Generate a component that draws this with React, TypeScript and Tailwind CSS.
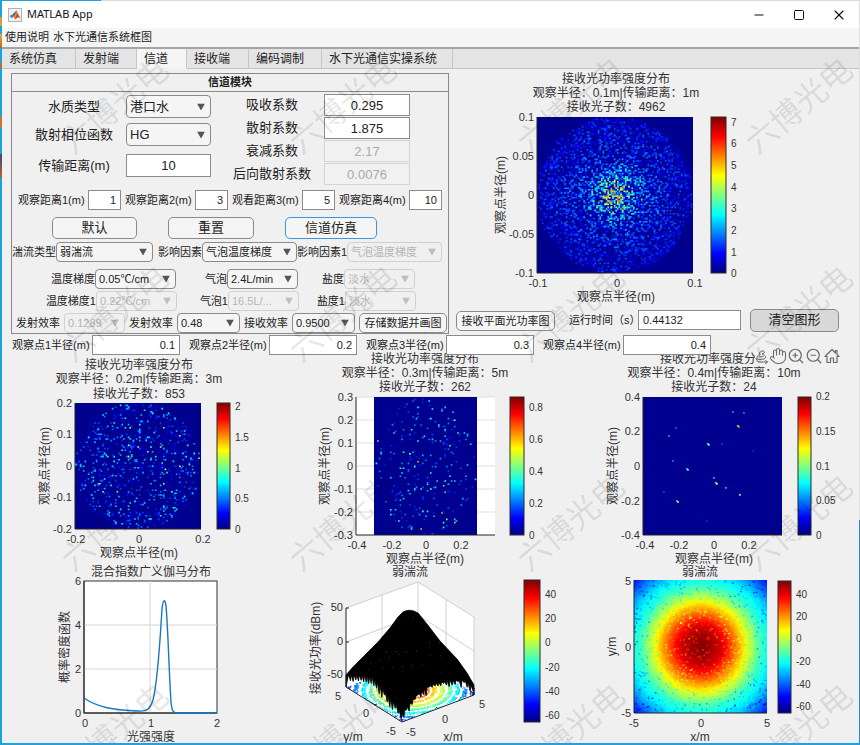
/**
 * 水下光通信仿真界面：信道页。
 *
 * 上半部分为信道参数面板与主强度图，下半部分为各观察点的结果图。
 */
import { type ReactNode } from 'react';
import { Hand, Minus, Square, X, ZoomIn, ZoomOut } from 'lucide-react';

type Tick = [label: string, pos: number];

interface Box {
  x: number;
  y: number;
  w: number;
  h: number;
}

/** 固定种子的随机数，保证每次绘制一致。 */
function createRandom(seed: number) {
  let s = seed;
  return () => {
    s = (s * 1664525 + 1013904223) % 4294967296;
    return s / 4294967296;
  };
}

const clamp = (v: number) => Math.min(1, Math.max(0, v));

/** MATLAB jet 色表，t 取 0~1。 */
function jet(t: number) {
  const c = (o: number) => Math.round(255 * clamp(1.5 - Math.abs(4 * t - o)));
  return `rgb(${c(3)},${c(2)},${c(1)})`;
}

type Speck = { x: number; y: number; t: number };

/** 按颜色分组绘制散点，每种颜色只生成一个 path。 */
function Specks({ items, size }: { items: Speck[]; size: number }) {
  const bins = new Map<number, string>();
  items.forEach(({ x, y, t }) => {
    const k = Math.round(clamp(t) * 32);
    const d = `M${x.toFixed(1)} ${y.toFixed(1)}h${size}v${size}h-${size}z`;
    bins.set(k, (bins.get(k) ?? '') + d);
  });
  return (
    <>
      {[...bins.entries()]
        .sort((a, b) => a[0] - b[0])
        .map(([k, d]) => (
          <path key={k} d={d} fill={jet(k / 32)} />
        ))}
    </>
  );
}

interface Spread {
  count: number;
  seed: number;
  /** 半径分布指数，0.5 为均匀，越大越向中心集中 */
  focus: number;
  cell: number;
  level: (r: number, n: number) => number;
}

/** 圆形接收面内的光子分布。 */
function photons(box: Box, { count, seed, focus, cell, level }: Spread): Speck[] {
  const rnd = createRandom(seed);
  const cx = box.x + box.w / 2;
  const cy = box.y + box.h / 2;
  return Array.from({ length: count }, () => {
    const r = Math.pow(rnd(), focus);
    const a = rnd() * Math.PI * 2;
    const x = cx + (r * Math.cos(a) * box.w) / 2;
    const y = cy + (r * Math.sin(a) * box.h) / 2;
    return {
      x: Math.min(box.x + box.w - cell, box.x + Math.floor((x - box.x) / cell) * cell),
      y: Math.min(box.y + box.h - cell, box.y + Math.floor((y - box.y) / cell) * cell),
      t: level(r, rnd()),
    };
  });
}

const MAIN: Box = { x: 537, y: 117, w: 156, h: 156 };
const SECOND: Box = { x: 75, y: 403, w: 126, h: 126 };
const THIRD: Box = { x: 374, y: 397, w: 103, h: 138 };
const FOURTH: Box = { x: 643, y: 397, w: 139, h: 138 };
const FIELD: Box = { x: 634, y: 580, w: 133, h: 133 };

const MAIN_SPECKS = photons(MAIN, {
  count: 6200,
  seed: 7,
  focus: 0.6,
  cell: 1.6,
  level: (r, n) =>
    0.02 + Math.pow(n, 1.7) * (0.38 - 0.2 * r) + Math.exp(-r * r * 16) * (0.1 + Math.pow(n, 3) * 0.34),
});
const SECOND_SPECKS = photons(SECOND, {
  count: 853,
  seed: 21,
  focus: 0.54,
  cell: 1.6,
  level: (_, n) => 0.11 + Math.pow(n, 2) * 0.3 + (n > 0.985 ? 0.2 : 0),
});
const THIRD_SPECKS = photons(THIRD, {
  count: 262,
  seed: 33,
  focus: 0.52,
  cell: 1.6,
  level: (_, n) => 0.14 + Math.pow(n, 2) * 0.34 + (n > 0.97 ? 0.22 : 0),
});
const FOURTH_SPECKS: Speck[] = [
  [732, 411, 0.28], [743, 412, 0.24], [737, 425, 0.4], [738, 426, 0.75], [675, 427, 0.22],
  [668, 435, 0.28], [707, 443, 0.38], [708, 444, 0.48], [721, 443, 0.18], [731, 441, 0.1],
  [752, 450, 0.16], [672, 460, 0.26], [686, 468, 0.3], [687, 469, 0.5], [713, 477, 0.32],
  [715, 482, 0.4], [716, 483, 0.65], [725, 487, 0.3], [739, 494, 0.44], [663, 491, 0.18],
  [667, 495, 0.14], [676, 500, 0.3], [677, 501, 0.6], [706, 520, 0.17], [702, 515, 0.09],
].map(([x, y, t]) => ({ x, y, t }));

/** 弱湍流场强度随像素半径变化的采样点，步长 10。 */
const FIELD_LEVELS = [1, 0.975, 0.92, 0.81, 0.69, 0.56, 0.44, 0.37, 0.28, 0.17, 0.1, 0.08];

function fieldLevel(r: number) {
  const i = Math.min(FIELD_LEVELS.length - 2, Math.floor(r / 10));
  const f = Math.min(1, r / 10 - i);
  return FIELD_LEVELS[i] * (1 - f) + FIELD_LEVELS[i + 1] * f;
}

const FIELD_SPECKS: Speck[] = (() => {
  const rnd = createRandom(91);
  return Array.from({ length: 2800 }, () => {
    const x = FIELD.x + rnd() * (FIELD.w - 2);
    const y = FIELD.y + rnd() * (FIELD.h - 2);
    const r = Math.hypot(x - 700.5, y - 646.5);
    const drop = rnd() < 0.22 ? 0.06 + rnd() * 0.14 : (rnd() - 0.4) * 0.07;
    return { x, y, t: Math.max(0.06, fieldLevel(r) - drop) };
  });
})();

/** 三维图底面上的等高散点。 */
const FLOOR_SPECKS: Speck[] = (() => {
  const rnd = createRandom(5);
  const out: Speck[] = [];
  for (let i = 0; i < 5200; i++) {
    const u = rnd() * 2 - 1;
    const v = rnd() * 2 - 1;
    const r = Math.hypot(u, v);
    if (Math.sin(r * 38) < -0.25) continue;
    out.push({ x: 410 + u * 36 - v * 28, y: 690 - u * 14 - v * 17, t: 1 - r * 0.62 });
  }
  return out;
})();

/** 曲面轮廓，下缘为锯齿。 */
const SURFACE = (() => {
  const rnd = createRandom(14);
  const edge: [number, number][] = [
    [474, 688], [465, 680], [450, 680], [436, 683], [427, 687], [419, 693], [410, 703],
    [402, 714], [396, 704], [388, 696], [380, 685], [372, 677], [362, 675], [346, 675],
  ];
  let d = 'M346 675L353 667L362 658L378 642L390 628L398 617L403 612Q410 608 418 613L427 624L440 641L457 659L467 673L474 685V695';
  for (let i = 0; i < edge.length - 1; i++) {
    const [x0, y0] = edge[i];
    const [x1, y1] = edge[i + 1];
    const n = Math.max(2, Math.round(Math.abs(x1 - x0) / 2.8));
    for (let k = 0; k < n; k++) {
      const x = x0 + ((x1 - x0) * k) / n;
      const y = y0 + ((y1 - y0) * k) / n;
      d += `L${x.toFixed(1)} ${y.toFixed(1)}L${(x - 0.8).toFixed(1)} ${(y + 1 + rnd() * 9).toFixed(1)}`;
    }
  }
  return `${d}L346 687Z`;
})();

interface LabelProps {
  x: number;
  y: number;
  anchor?: 'start' | 'middle' | 'end';
  className?: string;
  turned?: boolean;
  children: ReactNode;
}

function Label({ x, y, anchor = 'middle', className = 'text-[11px]', turned, children }: LabelProps) {
  return (
    <text
      x={x}
      y={y}
      textAnchor={anchor}
      dominantBaseline="central"
      className={`${className} fill-[#333]`}
      transform={turned ? `rotate(-90 ${x} ${y})` : undefined}
    >
      {children}
    </text>
  );
}

function Colorbar({ id, box, ticks }: { id: string; box: Box; ticks: Tick[] }) {
  return (
    <g>
      <defs>
        <linearGradient id={id} x1="0" y1="1" x2="0" y2="0">
          {Array.from({ length: 17 }, (_, i) => (
            <stop key={i} offset={i / 16} stopColor={jet(i / 16)} />
          ))}
        </linearGradient>
      </defs>
      <rect x={box.x} y={box.y} width={box.w} height={box.h} fill={`url(#${id})`} stroke="#2a2a2a" />
      {ticks.map(([label, y]) => (
        <Label key={label} x={box.x + box.w + 5} y={y} anchor="start" className="text-[10px]">
          {label}
        </Label>
      ))}
    </g>
  );
}

interface AxesProps {
  box: Box;
  titles: Tick[];
  titleX: number;
  xTicks: Tick[];
  yTicks: Tick[];
  xLabel: string;
  yLabel: string;
  yLabelX: number;
  children: ReactNode;
}

/** 通用二维坐标区：标题、刻度、轴名。 */
function Axes({ box, titles, titleX, xTicks, yTicks, xLabel, yLabel, yLabelX, children }: AxesProps) {
  const bottom = box.y + box.h;
  return (
    <g>
      {titles.map(([t, y]) => (
        <Label key={t} x={titleX} y={y} className="text-[12px]">
          {t}
        </Label>
      ))}
      {children}
      <path d={`M${box.x} ${box.y}V${bottom}H${box.x + box.w}`} fill="none" stroke="#222" />
      {yTicks.map(([t, y]) => (
        <Label key={t} x={box.x - 3} y={y} anchor="end">
          {t}
        </Label>
      ))}
      {xTicks.map(([t, x]) => (
        <Label key={t} x={x} y={bottom + 10}>
          {t}
        </Label>
      ))}
      <Label x={titleX} y={bottom + 24} className="text-[12px]">
        {xLabel}
      </Label>
      <Label x={yLabelX} y={box.y + box.h / 2} className="text-[12px]" turned>
        {yLabel}
      </Label>
    </g>
  );
}

const RADIUS = '观察点半径(m)';

function MainChart() {
  return (
    <svg viewBox="449 69 408 236" preserveAspectRatio="xMinYMin" className="h-[236px] w-full overflow-visible" role="img" aria-label="接收光功率强度分布 1m">
      <Axes
        box={MAIN}
        titleX={616}
        titles={[['接收光功率强度分布', 79], ['观察半径：0.1m|传输距离：1m', 93], ['接收光子数：4962', 107]]}
        yTicks={[['0.1', 117], ['0.05', 156], ['0', 195], ['-0.05', 234], ['-0.1', 273]]}
        xTicks={[['-0.1', 538], ['0', 617], ['0.1', 695]]}
        xLabel={RADIUS}
        yLabel={RADIUS}
        yLabelX={501}
      >
        <rect x={MAIN.x} y={MAIN.y} width={MAIN.w} height={MAIN.h} fill="#00008f" />
        <Specks items={MAIN_SPECKS} size={1.6} />
      </Axes>
      <Colorbar
        id="bar-main"
        box={{ x: 711, y: 117, w: 15, h: 156 }}
        ticks={[['7', 122], ['6', 143], ['5', 165], ['4', 187], ['3', 208], ['2', 230], ['1', 252], ['0', 273]]}
      />
    </svg>
  );
}

function SecondChart() {
  return (
    <svg viewBox="2 345 285 220" className="h-[220px] w-[285px] overflow-visible" role="img" aria-label="接收光功率强度分布 3m">
      <Axes
        box={SECOND}
        titleX={139}
        titles={[['接收光功率强度分布', 365], ['观察半径：0.2m|传输距离：3m', 379], ['接收光子数：853', 394]]}
        yTicks={[['0.2', 403], ['0.1', 434], ['0', 466], ['-0.1', 497], ['-0.2', 529]]}
        xTicks={[['-0.2', 76], ['0', 139], ['0.2', 203]]}
        xLabel={RADIUS}
        yLabel={RADIUS}
        yLabelX={45}
      >
        <rect x={SECOND.x} y={SECOND.y} width={SECOND.w} height={SECOND.h} fill="#00008f" />
        <Specks items={SECOND_SPECKS} size={1.6} />
      </Axes>
      <Colorbar
        id="bar-second"
        box={{ x: 217, y: 403, w: 13, h: 126 }}
        ticks={[['2', 406], ['1.5', 437], ['1', 468], ['0.5', 498], ['0', 529]]}
      />
    </svg>
  );
}

function ThirdChart() {
  return (
    <svg viewBox="288 345 285 220" className="h-[220px] w-[285px] overflow-visible" role="img" aria-label="接收光功率强度分布 5m">
      <Axes
        box={{ x: 356, y: 397, w: 139, h: 138 }}
        titleX={425}
        titles={[['接收光功率强度分布', 359], ['观察半径：0.3m|传输距离：5m', 373], ['接收光子数：262', 387]]}
        yTicks={[['0.3', 397], ['0.2', 420], ['0.1', 443], ['0', 466], ['-0.1', 489], ['-0.2', 512], ['-0.3', 535]]}
        xTicks={[['-0.4', 357], ['-0.2', 392], ['0', 426], ['0.2', 461]]}
        xLabel={RADIUS}
        yLabel={RADIUS}
        yLabelX={325}
      >
        <rect x={356} y={397} width={139} height={138} fill="#fff" />
        <path d="M356 397H495M356 420H495M356 443H495M356 466H495M356 489H495M356 512H495" stroke="#dfdfdf" />
        <rect x={THIRD.x} y={THIRD.y} width={THIRD.w} height={THIRD.h} fill="#00008f" />
        <Specks items={THIRD_SPECKS} size={1.6} />
      </Axes>
      <Colorbar
        id="bar-third"
        box={{ x: 510, y: 397, w: 14, h: 138 }}
        ticks={[['0.8', 407], ['0.6', 439], ['0.4', 471], ['0.2', 503], ['0', 535]]}
      />
    </svg>
  );
}

function FourthChart() {
  return (
    <svg viewBox="574 345 285 220" className="h-[220px] w-[285px] overflow-visible" role="img" aria-label="接收光功率强度分布 10m">
      <Axes
        box={FOURTH}
        titleX={714}
        titles={[['接收光功率强度分布', 359], ['观察半径：0.4m|传输距离：10m', 373], ['接收光子数：24', 387]]}
        yTicks={[['0.4', 397], ['0.2', 431], ['0', 466], ['-0.2', 501], ['-0.4', 535]]}
        xTicks={[['-0.4', 645], ['-0.2', 679], ['0', 714], ['0.2', 749]]}
        xLabel={RADIUS}
        yLabel={RADIUS}
        yLabelX={613}
      >
        <rect x={FOURTH.x} y={FOURTH.y} width={FOURTH.w} height={FOURTH.h} fill="#00008f" />
        <Specks items={FOURTH_SPECKS} size={1.8} />
      </Axes>
      <Colorbar
        id="bar-fourth"
        box={{ x: 798, y: 397, w: 13, h: 138 }}
        ticks={[['0.2', 396], ['0.15', 431], ['0.1', 466], ['0.05', 500], ['0', 535]]}
      />
    </svg>
  );
}

function GammaChart() {
  return (
    <svg viewBox="2 565 285 178" className="h-[178px] w-[285px] overflow-visible" role="img" aria-label="混合指数广义伽马分布">
      <Axes
        box={{ x: 84, y: 581, w: 133, h: 132 }}
        titleX={151}
        titles={[['混合指数广义伽马分布', 572]]}
        yTicks={[['6', 581], ['4', 625], ['2', 669], ['0', 713]]}
        xTicks={[['0', 85], ['1', 151], ['2', 217]]}
        xLabel="光强强度"
        yLabel="概率密度函数"
        yLabelX={65}
      >
        <rect x={84} y={581} width={133} height={132} fill="#fff" stroke="#333" />
        <path d="M84 625H217M84 669H217M150 581V713" stroke="#d5d5d5" />
      </Axes>
      <path
        d="M84 698C97 707 112 710 138 711C147 712 150 709 153 700C158 680 160 640 162 609C163 599 165 598 166 606C168 628 169 672 171 702C172 711 173 713 177 713H217"
        fill="none"
        stroke="#1878be"
        strokeWidth={1.4}
      />
    </svg>
  );
}

function SurfaceChart() {
  return (
    <svg viewBox="288 565 285 178" className="h-[178px] w-[285px] overflow-visible" role="img" aria-label="弱湍流三维图">
      <Label x={410} y={572} className="text-[12px]">弱湍流</Label>
      <path d="M346 608L418 582L474 617V695L402 722L346 687Z" fill="#fff" />
      <path d="M346 608L418 582L474 617V695M418 582V640M382 595V660M446 599V670M346 642L418 615L474 651" fill="none" stroke="#d0d0d0" />
      <Specks items={FLOOR_SPECKS} size={1.1} />
      <path d={SURFACE} fill="#000" stroke="#000" strokeWidth={0.8} />
      <g strokeWidth={1} strokeDasharray="1 9" opacity={0.6}>
        <path d="M403 616l20 1" stroke="#8c1c10" />
        <path d="M386 652l33 -1m10 -8l12 0" stroke="#6f7a20" />
        <path d="M370 664l30 -10m30 1l12 1m-60 12l50 -4" stroke="#1c7a6c" />
        <path d="M358 670l12 0m70 2l20 3" stroke="#1c4a8c" />
      </g>
      <path d="M346 608V687L402 722L474 695" fill="none" stroke="#222" />
      <path d="M346 608h3M346 642h3M346 674h3M374 705l3 -1M438 709l-2 -2" stroke="#222" />
      <Label x={343} y={607} anchor="end">50</Label>
      <Label x={343} y={641} anchor="end">0</Label>
      <Label x={343} y={674} anchor="end">-50</Label>
      <Label x={338} y={696}>5</Label>
      <Label x={366} y={713}>0</Label>
      <Label x={391} y={731}>-5</Label>
      <Label x={411} y={732}>-5</Label>
      <Label x={445} y={719}>0</Label>
      <Label x={482} y={704}>5</Label>
      <Label x={353} y={737} className="text-[12px]">y/m</Label>
      <Label x={453} y={737} className="text-[12px]">x/m</Label>
      <Label x={316} y={648} className="text-[12px]" turned>接收光功率(dBm)</Label>
      <Colorbar
        id="bar-surface"
        box={{ x: 524, y: 580, w: 16, h: 142 }}
        ticks={[['40', 594], ['20', 618], ['0', 642], ['-20', 667], ['-40', 691], ['-60', 715]]}
      />
    </svg>
  );
}

function FieldChart() {
  return (
    <svg viewBox="574 565 285 178" className="h-[178px] w-[285px] overflow-visible" role="img" aria-label="弱湍流平面图">
      <defs>
        <radialGradient id="field" gradientUnits="userSpaceOnUse" cx="700.5" cy="646.5" r="96">
          {Array.from({ length: 25 }, (_, i) => (
            <stop key={i} offset={i / 24} stopColor={jet(fieldLevel(i * 4))} />
          ))}
        </radialGradient>
      </defs>
      <Axes
        box={FIELD}
        titleX={700}
        titles={[['弱湍流', 572]]}
        yTicks={[['5', 581], ['0', 647], ['-5', 713]]}
        xTicks={[['-5', 634], ['0', 701], ['5', 767]]}
        xLabel="x/m"
        yLabel="y/m"
        yLabelX={612}
      >
        <rect x={FIELD.x} y={FIELD.y} width={FIELD.w} height={FIELD.h} fill="url(#field)" />
        <Specks items={FIELD_SPECKS} size={1.6} />
      </Axes>
      <Colorbar
        id="bar-field"
        box={{ x: 778, y: 581, w: 13, h: 132 }}
        ticks={[['40', 594], ['20', 616], ['0', 638], ['-20', 661], ['-40', 684], ['-60', 706]]}
      />
    </svg>
  );
}

interface FieldProps {
  id: string;
  label: string;
  value: string;
  labelClass: string;
  className: string;
  disabled?: boolean;
}

function NumberField({ id, label, value, labelClass, className, disabled }: FieldProps) {
  return (
    <>
      <label htmlFor={id} className={`shrink-0 whitespace-nowrap ${labelClass}`}>
        {label}
      </label>
      <input
        id={id}
        defaultValue={value}
        disabled={disabled}
        className={`min-w-0 shrink-0 border border-[#8c8c8c] bg-white text-[#222] outline-none disabled:border-[#d4d4d4] disabled:bg-[#f1f1f1] disabled:text-[#aaa] ${className}`}
      />
    </>
  );
}

function SelectField({ id, label, value, labelClass, className, disabled }: FieldProps) {
  return (
    <>
      <label htmlFor={id} className={`shrink-0 whitespace-nowrap ${labelClass}`}>
        {label}
      </label>
      <span className={`relative shrink-0 ${className}`}>
        <select
          id={id}
          defaultValue={value}
          disabled={disabled}
          className="block h-full w-full appearance-none rounded-[4px] border border-[#8a8a8a] bg-[#f5f5f5] pl-[3px] text-[#222] opacity-100 outline-none disabled:border-[#d0d0d0] disabled:bg-[#f0f0f0] disabled:text-[#b4b4b4]"
        >
          <option>{value}</option>
        </select>
        <svg
          viewBox="0 0 8 7"
          className={`pointer-events-none absolute top-1/2 right-[6px] h-[7px] w-[8px] -translate-y-1/2 ${disabled ? 'fill-[#bdbdbd]' : 'fill-[#555]'}`}
        >
          <path d="M0 0H8L4 7Z" />
        </svg>
      </span>
    </>
  );
}

function PushButton({ className, children }: { className: string; children: ReactNode }) {
  return (
    <button
      type="button"
      className={`flex shrink-0 items-center justify-center whitespace-nowrap rounded-[5px] border text-[#222] ${className}`}
    >
      {children}
    </button>
  );
}

function ChannelPanel() {
  const left = 'w-[100px] text-center text-[13px]';
  const tall = 'h-[23px] w-[85px] text-[13px]';
  return (
    <section className="mt-1 ml-[9px] w-[438px] shrink-0 border border-[#8a8a8a] text-[11px]">
      <h2 className="flex h-[18px] items-center justify-center border-b border-[#8a8a8a] text-[11px] font-bold">信道模块</h2>

      <div className="flex">
        <div className="ml-3 flex flex-col pt-[3px]">
          <div className="flex items-center gap-[2px]">
            <SelectField id="water" label="水质类型" value="港口水" labelClass={left} className={tall} />
          </div>
          <div className="mt-[5px] flex items-center gap-[2px]">
            <SelectField id="phase" label="散射相位函数" value="HG" labelClass={left} className={tall} />
          </div>
          <div className="mt-2 flex items-center gap-[2px]">
            <NumberField id="range" label="传输距离(m)" value="10" labelClass={left} className={`${tall} text-center`} />
          </div>
        </div>
        <div className="ml-[11px] flex flex-col gap-px pt-[2px]">
          {[
            ['吸收系数', '0.295', false],
            ['散射系数', '1.875', false],
            ['衰减系数', '2.17', true],
            ['后向散射系数', '0.0076', true],
          ].map(([label, value, off]) => (
            <div key={label as string} className="flex items-center gap-[2px]">
              <NumberField
                id={`coef-${label}`}
                label={label as string}
                value={value as string}
                disabled={off as boolean}
                labelClass={left}
                className="h-[22px] w-[86px] text-center text-[13px]"
              />
            </div>
          ))}
        </div>
      </div>

      <div className="mt-[5px] ml-[6px] flex items-center gap-1">
        {[
          ['观察距离1(m)', '1'],
          ['观察距离2(m)', '3'],
          ['观看距离3(m)', '5'],
          ['观察距离4(m)', '10'],
        ].map(([label, value]) => (
          <NumberField
            key={label}
            id={label}
            label={label}
            value={value}
            labelClass="w-[66px]"
            className="h-5 w-[33px] pr-1 text-right text-[11px]"
          />
        ))}
      </div>

      <div className="mt-[7px] ml-10 flex gap-[31px] text-[13px]">
        <PushButton className="h-[22px] w-[85px] border-[#8a8a8a] bg-[#f5f5f5]">默认</PushButton>
        <PushButton className="h-[22px] w-[86px] border-[#8a8a8a] bg-[#f5f5f5]">重置</PushButton>
        <PushButton className="h-[22px] w-[92px] border-[#3f94dc] bg-[#f5f5f5]">信道仿真</PushButton>
      </div>

      <div className="mt-[3px] flex items-center">
        <SelectField id="turb" label="湍流类型" value="弱湍流" labelClass="w-[44px]" className="h-5 w-[97px]" />
        <SelectField id="factor" label="影响因素" value="气泡温度梯度" labelClass="w-[49px] text-right" className="h-5 w-[95px]" />
        <SelectField id="factor1" label="影响因素1" value="气泡温度梯度" labelClass="w-[50px]" className="h-5 w-[95px]" disabled />
      </div>

      <div className="mt-[7px] flex items-center">
        <SelectField id="temp" label="温度梯度" value="0.05℃/cm" labelClass="w-[83px] text-right" className="h-5 w-[81px]" />
        <SelectField id="bubble" label="气泡" value="2.4L/min" labelClass="w-[51px] text-right" className="h-5 w-[71px]" />
        <SelectField id="salt" label="盐度" value="淡水" labelClass="w-[46px] text-right" className="h-5 w-[71px]" disabled />
      </div>

      <div className="mt-[2px] flex items-center">
        <SelectField id="temp1" label="温度梯度1" value="0.22℃/cm" labelClass="w-[84px] text-right" className="h-5 w-[81px]" disabled />
        <SelectField id="bubble1" label="气泡1" value="16.5L/..." labelClass="w-[51px] text-right" className="h-5 w-[71px]" disabled />
        <SelectField id="salt1" label="盐度1" value="淡水" labelClass="w-[46px] text-right" className="h-5 w-[71px]" disabled />
      </div>

      <div className="mt-[2px] ml-1 flex items-center gap-1">
        <SelectField id="tx0" label="发射效率" value="0.1289" labelClass="w-[44px]" className="h-5 w-[61px]" disabled />
        <SelectField id="tx" label="发射效率" value="0.48" labelClass="w-[44px]" className="h-5 w-[63px]" />
        <SelectField id="rx" label="接收效率" value="0.9500" labelClass="w-[44px]" className="h-5 w-[63px]" />
        <PushButton className="h-5 w-[88px] border-[#8a8a8a] bg-[#f5f5f5]">存储数据并画图</PushButton>
      </div>
    </section>
  );
}

/** 坐标区右上角的工具按钮。 */
function ChartTools() {
  return (
    <div className="absolute top-[2px] right-[18px] flex bg-[#f0f0f0] text-[#6a6a6a]">
      <button type="button" aria-label="导出">
        <svg viewBox="0 0 14 18" className="h-[18px] w-[14px]" fill="none" stroke="currentColor" strokeLinecap="round" strokeLinejoin="round">
          <path d="M1 11.500L3 15H12.500M10.500 13.500L12.500 15L10.500 16.500" />
          <path d="M2 11.500C1.500 9 3 8 5 8L4.500 5.500L8 3.500L9.500 5.500L7 7L9.500 8.500C11 9.500 11 11 9 12L4.500 12.500Z" />
          <path d="M4 10L8 9.500" />
        </svg>
      </button>
      <button type="button" aria-label="平移"><Hand className="h-[18px] w-[18px]" strokeWidth={1.4} /></button>
      <button type="button" aria-label="放大"><ZoomIn className="h-[18px] w-[18px]" strokeWidth={1.6} /></button>
      <button type="button" aria-label="缩小"><ZoomOut className="h-[18px] w-[18px]" strokeWidth={1.6} /></button>
      <button type="button" aria-label="还原视图">
        <svg viewBox="0 0 18 18" className="h-[18px] w-[18px]" fill="none" stroke="currentColor" strokeWidth={1.2} strokeLinejoin="round">
          <path d="M2 9.500L9 2.500L12.500 6V3.500H14V7.500L16 9.500H14V15.500H10.500V11H7.500V15.500H4V9.500Z" />
        </svg>
      </button>
    </div>
  );
}

function TitleBar() {
  return (
    <header className="flex h-[27px] items-center bg-white pl-[6px]">
      <svg viewBox="0 0 14 14" className="h-[14px] w-[14px]">
        <rect x="0.5" y="0.5" width="13" height="13" fill="#f1f1f1" stroke="#a9b4bc" />
        <path d="M1.500 8L4.500 6.500L6 8.500L4 10Z" fill="#3f7fb5" />
        <path d="M4.500 6.500L8.500 2.500L7.500 7L6 8.500Z" fill="#2f5f8f" />
        <path d="M8.500 2.500L10 6L12.500 10.500L10 9L7 11.500L6 8.500Z" fill="#c8401c" />
        <path d="M8.500 2.500L9 6L7 11L6 8.500Z" fill="#f08a2c" />
      </svg>
      <h1 className="ml-[5px] font-['Noto_Sans'] text-[11px] text-[#111]">MATLAB App</h1>
      <div className="ml-auto flex text-[#111]">
        <button type="button" aria-label="最小化" className="flex h-[27px] w-10 items-center justify-center"><Minus className="h-[14px] w-[14px]" strokeWidth={1.8} /></button>
        <button type="button" aria-label="最大化" className="flex h-[27px] w-10 items-center justify-center">
          <Square className="h-3 w-3" strokeWidth={2} strokeLinejoin="miter" />
        </button>
        <button type="button" aria-label="关闭" className="flex h-[27px] w-10 items-center justify-center"><X className="h-4 w-4" strokeWidth={1.6} /></button>
      </div>
    </header>
  );
}

const TABS: [label: string, width: string][] = [
  ['系统仿真', 'w-[74px]'],
  ['发射端', 'w-[61px]'],
  ['信道', 'w-[50px]'],
  ['接收端', 'w-[62px]'],
  ['编码调制', 'w-[73px]'],
  ['水下光通信实操系统', 'w-[131px]'],
];

function TabBar() {
  return (
    <div role="tablist" className="flex h-[22px] border-t-2 border-[#a5a5a5] bg-[#e4e4e4] text-[12px]">
      {TABS.map(([label, width]) => (
        <button
          key={label}
          type="button"
          role="tab"
          aria-selected={label === '信道'}
          className={`whitespace-nowrap border-r border-b border-r-[#c6c6c6] border-b-[#c6c6c6] pl-[7px] text-left aria-selected:border-b-[#f0f0f0] aria-selected:bg-[#f5f5f5] ${width}`}
        >
          {label}
        </button>
      ))}
      <span className="flex-1 border-b border-[#c6c6c6]" />
    </div>
  );
}

function Watermark() {
  return (
    <svg className="pointer-events-none absolute inset-0 z-20 h-full w-full" aria-hidden="true">
      {[106, 314, 523, 732].flatMap((y) =>
        [115, 343, 571, 799].map((x) => (
          <text
            key={`${x}-${y}`}
            x={x}
            y={y}
            textAnchor="middle"
            dominantBaseline="central"
            transform={`rotate(-40 ${x} ${y})`}
            className="fill-black/10 text-[32px]"
          >
            六博光电
          </text>
        )),
      )}
    </svg>
  );
}

export default function App() {
  return (
    <div className="relative flex overflow-hidden border-b-2 border-[#1ba3de] bg-[#f0f0f0] font-['Liberation_Sans','Noto_Sans_CJK_SC',sans-serif] text-[#222]">
      <div className="w-[2px] shrink-0 bg-[linear-gradient(#1ba3de_17px,#d9a13a_17px,#d9a13a_26px,#1ba3de_26px,#1ba3de_34px,#e0b030_34px,#b5652c_48px,#1ba3de_48px,#1ba3de_62px,#b0703a_62px,#b0703a_68px,#1ba3de_68px,#1ba3de_116px,#c07838_116px,#c07838_128px,#1ba3de_128px,#1ba3de_154px,#3a4a78_154px,#b5652c_178px,#1ba3de_178px)]" />
      <div className="min-w-0 flex-1">
        <div className="flex h-px">
          <span className="w-[99px] bg-[#1ba3de]" />
          <span className="flex-1 bg-[#dcdcdc]" />
        </div>
        <TitleBar />
        <nav className="flex h-[19px] items-center gap-1 bg-[#f5f5f5] pl-[3px] text-[11px]">
          <button type="button">使用说明</button>
          <button type="button">水下光通信系统框图</button>
        </nav>
        <TabBar />

        <main>
          <div className="flex">
            <ChannelPanel />
            <div className="min-w-0 flex-1">
              <MainChart />
              <div className="mt-[3px] flex h-[24px] items-center pl-[7px] text-[11px]">
                <PushButton className="mt-[2px] h-5 w-[99px] border-[#8a8a8a] bg-[#f5f5f5]">接收平面光功率图</PushButton>
                <div className="ml-[14px] flex items-center">
                  <NumberField id="runtime" label="运行时间（s）" value="0.44132" labelClass="w-[69px]" className="h-5 w-[103px] pl-1 text-[11px]" />
                </div>
                <PushButton className="ml-[9px] h-[23px] w-[89px] border-[#8a8a8a] bg-[#d8d8d8] text-[13px]">清空图形</PushButton>
              </div>
            </div>
          </div>

          <div className="relative z-10 mt-px ml-[10px] flex items-center text-[11px]">
            {['0.1', '0.2', '0.3', '0.4'].map((value, i) => (
              <div key={value} className="mr-[9px] flex items-center gap-[2px]">
                <NumberField
                  id={`radius-${i + 1}`}
                  label={`观察点${i + 1}半径(m)`}
                  value={value}
                  labelClass="w-[78px]"
                  className="h-5 w-[88px] pr-1 text-right text-[11px]"
                />
              </div>
            ))}
          </div>

          <div className="-mt-[10px] flex justify-between">
            <SecondChart />
            <ThirdChart />
            <div className="relative">
              <FourthChart />
              <ChartTools />
            </div>
          </div>
          <div className="flex justify-between">
            <GammaChart />
            <SurfaceChart />
            <FieldChart />
          </div>
        </main>
      </div>
      <div className="flex w-px shrink-0 flex-col">
        <span className="flex-[7] bg-[#dedede]" />
        <span className="flex-[3] bg-[#2a86c0]" />
      </div>
      <Watermark />
    </div>
  );
}
